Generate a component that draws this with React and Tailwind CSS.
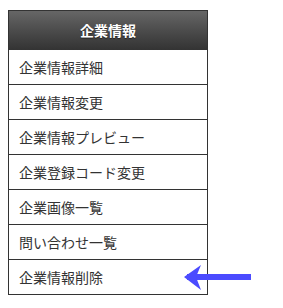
import React from "react";

const items = [
  "企業情報詳細",
  "企業情報変更",
  "企業情報プレビュー",
  "企業登録コード変更",
  "企業画像一覧",
  "問い合わせ一覧",
  "企業情報削除",
];

export default function App() {
  return (
    <div
      className="relative w-[283px] h-[308px] bg-white pl-[8px] pt-[10px]"
      style={{ fontFamily: '"Noto Sans CJK JP", "Noto Sans", sans-serif' }}
    >
      <div className="w-[200px] border border-[#333333] flex flex-col">
        <div className="h-[39px] flex items-center justify-center bg-gradient-to-b from-[#666666] to-[#333333] text-white font-bold text-[14px] [text-shadow:0_1px_1px_rgba(0,0,0,0.5)]">
          企業情報
        </div>
        {items.map((t, i) => (
          <div
            key={t}
            className={
              i === 0
                ? "h-[34px] flex items-center pl-[10px] text-[14px] text-[#333333]"
                : "h-[35px] flex items-center pl-[10px] text-[14px] text-[#333333] border-t border-[#333333]"
            }
          >
            {t}
          </div>
        ))}
      </div>
      <svg
        className="absolute left-[184px] top-[265px]"
        width="68"
        height="25"
        viewBox="0 0 68 25"
      >
        <rect x="3" y="9" width="64" height="6" fill="#4b4bff" />
        <polygon points="0,12 17,0 12,12 17,25" fill="#4b4bff" />
      </svg>
    </div>
  );
}
